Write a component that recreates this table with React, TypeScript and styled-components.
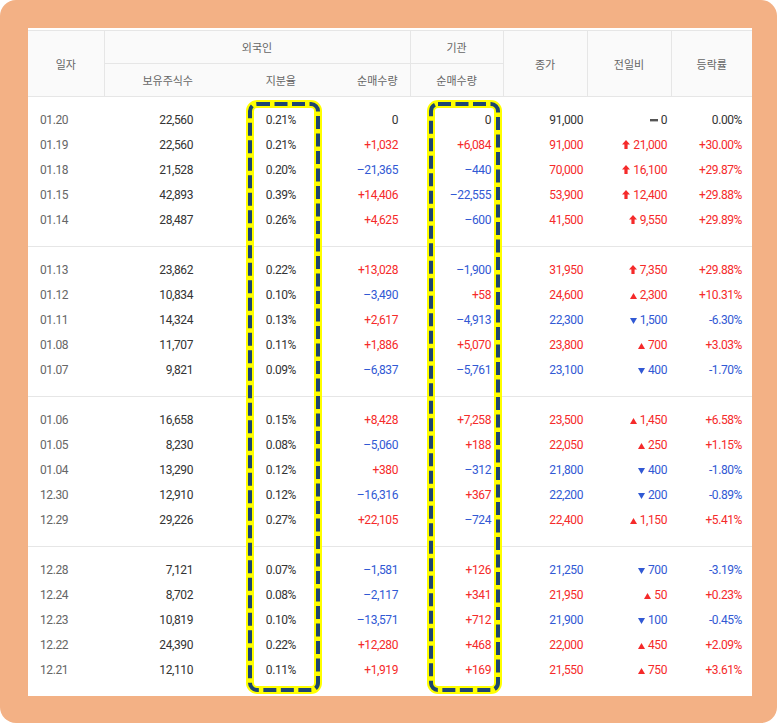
import styled, { createGlobalStyle } from "styled-components";

type Kind = "upper" | "up" | "down" | "flat";
type Row = [string, string, string, string, string, string, Kind, string, string];

const groups: Row[][] = [
  [
    ["01.20", "22,560", "0.21%", "0", "0", "91,000", "flat", "0", "0.00%"],
    ["01.19", "22,560", "0.21%", "+1,032", "+6,084", "91,000", "upper", "21,000", "+30.00%"],
    ["01.18", "21,528", "0.20%", "–21,365", "–440", "70,000", "upper", "16,100", "+29.87%"],
    ["01.15", "42,893", "0.39%", "+14,406", "–22,555", "53,900", "upper", "12,400", "+29.88%"],
    ["01.14", "28,487", "0.26%", "+4,625", "–600", "41,500", "upper", "9,550", "+29.89%"],
  ],
  [
    ["01.13", "23,862", "0.22%", "+13,028", "–1,900", "31,950", "upper", "7,350", "+29.88%"],
    ["01.12", "10,834", "0.10%", "–3,490", "+58", "24,600", "up", "2,300", "+10.31%"],
    ["01.11", "14,324", "0.13%", "+2,617", "–4,913", "22,300", "down", "1,500", "-6.30%"],
    ["01.08", "11,707", "0.11%", "+1,886", "+5,070", "23,800", "up", "700", "+3.03%"],
    ["01.07", "9,821", "0.09%", "–6,837", "–5,761", "23,100", "down", "400", "-1.70%"],
  ],
  [
    ["01.06", "16,658", "0.15%", "+8,428", "+7,258", "23,500", "up", "1,450", "+6.58%"],
    ["01.05", "8,230", "0.08%", "–5,060", "+188", "22,050", "up", "250", "+1.15%"],
    ["01.04", "13,290", "0.12%", "+380", "–312", "21,800", "down", "400", "-1.80%"],
    ["12.30", "12,910", "0.12%", "–16,316", "+367", "22,200", "down", "200", "-0.89%"],
    ["12.29", "29,226", "0.27%", "+22,105", "–724", "22,400", "up", "1,150", "+5.41%"],
  ],
  [
    ["12.28", "7,121", "0.07%", "–1,581", "+126", "21,250", "down", "700", "-3.19%"],
    ["12.24", "8,702", "0.08%", "–2,117", "+341", "21,950", "up", "50", "+0.23%"],
    ["12.23", "10,819", "0.10%", "–13,571", "+712", "21,900", "down", "100", "-0.45%"],
    ["12.22", "24,390", "0.22%", "+12,280", "+468", "22,000", "up", "450", "+2.09%"],
    ["12.21", "12,110", "0.11%", "+1,919", "+169", "21,550", "up", "750", "+3.61%"],
  ],
];

type Tone = "plain" | "rise" | "fall" | "muted";

const toneOf = (v: string): Tone =>
  v.startsWith("+") ? "rise" : v.startsWith("–") || v.startsWith("-") ? "fall" : "plain";

const kindTone = (k: Kind): Tone => (k === "upper" || k === "up" ? "rise" : k === "down" ? "fall" : "plain");

const toneColor = {
  plain: "#333333",
  rise: "#f52a2a",
  fall: "#3159d4",
  muted: "#666666",
};

const widths = [76, 101, 103, 102, 93, 84, 84, 81];

const Global = createGlobalStyle`
  html, body {
    margin: 0;
    background: #ffffff;
  }
  body {
    font-family: Roboto, "Noto Sans CJK KR", sans-serif;
  }
`;

const Frame = styled.div`
  box-sizing: border-box;
  width: 777px;
  height: 723px;
  padding: 28px 25px 27px 28px;
  background: #f3b185;
  border-radius: 16px;
`;

const Panel = styled.div`
  position: relative;
  box-sizing: border-box;
  width: 724px;
  height: 668px;
  padding-top: 2px;
  background: #ffffff;
`;

const Table = styled.table`
  width: 724px;
  border-collapse: collapse;
  table-layout: fixed;
`;

const Col = styled.col<{ $w: number }>`
  width: ${(p) => p.$w}px;
`;

const HeadCell = styled.th<{ $align?: "center" | "right"; $divide?: boolean }>`
  height: 33px;
  padding: 0 ${(p) => (p.$align === "right" ? "12px" : "0")} 0 0;
  box-sizing: border-box;
  background: #fafafa;
  border-top: 1px solid #e6e6e6;
  border-bottom: 1px solid #e6e6e6;
  border-left: ${(p) => (p.$divide ? "1px solid #e6e6e6" : "none")};
  font-family: "Noto Sans CJK KR", sans-serif;
  font-size: 11px;
  font-weight: 400;
  color: #666666;
  text-align: ${(p) => p.$align ?? "center"};
  vertical-align: middle;
`;

const Group = styled.tbody<{ $last?: boolean }>`
  border-bottom: ${(p) => (p.$last ? "none" : "1px solid #e6e6e6")};

  tr:first-child td {
    padding-top: 11px;
  }
  tr:last-child td {
    padding-bottom: 13px;
  }
`;

const Cell = styled.td<{ $tone: Tone; $left?: boolean; $pr?: number }>`
  padding: 0 ${(p) => (p.$left ? 0 : p.$pr ?? 12)}px 0 ${(p) => (p.$left ? 12 : 0)}px;
  line-height: 25px;
  font-size: 12px;
  letter-spacing: -0.4px;
  color: ${(p) => toneColor[p.$tone]};
  text-align: ${(p) => (p.$left ? "left" : "right")};
  white-space: nowrap;
`;

const Mark = styled.svg`
  display: inline-block;
  margin-right: 3px;
  vertical-align: 0px;
`;

const Highlight = styled.svg<{ $left: number; $w: number }>`
  position: absolute;
  top: 72px;
  left: ${(p) => p.$left}px;
  width: ${(p) => p.$w}px;
  height: 594px;
  pointer-events: none;
`;

const DiffIcon = ({ kind }: { kind: Kind }) => {
  if (kind === "upper")
    return (
      <Mark width="8" height="9" viewBox="0 0 8 9">
        <path d="M4 0 L8 4.5 H5.6 V9 H2.4 V4.5 H0 Z" fill="#f52a2a" />
      </Mark>
    );
  if (kind === "up")
    return (
      <Mark width="7" height="6" viewBox="0 0 7 6">
        <path d="M3.5 0 L7 6 H0 Z" fill="#f52a2a" />
      </Mark>
    );
  if (kind === "down")
    return (
      <Mark width="7" height="6" viewBox="0 0 7 6">
        <path d="M0 0 H7 L3.5 6 Z" fill="#3159d4" />
      </Mark>
    );
  return (
    <Mark width="8" height="8" viewBox="0 0 8 8">
      <rect x="0" y="3" width="8" height="2.4" fill="#555555" />
    </Mark>
  );
};

const Box = ({ left, w }: { left: number; w: number }) => (
  <Highlight $left={left} $w={w} viewBox={`0 0 ${w} 594`}>
    <rect x="4" y="4" width={w - 8} height="586" rx="7" fill="none" stroke="#ffff00" strokeWidth="8" />
    <rect
      x="4"
      y="4"
      width={w - 8}
      height="586"
      rx="7"
      fill="none"
      stroke="#1d4670"
      strokeWidth="4"
      strokeDasharray="13 4.5"
    />
  </Highlight>
);

export default function App() {
  return (
    <>
      <Global />
      <Frame>
        <Panel>
          <Table>
            <colgroup>
              {widths.map((w, i) => (
                <Col key={i} $w={w} />
              ))}
            </colgroup>
            <thead>
              <tr>
                <HeadCell rowSpan={2}>일자</HeadCell>
                <HeadCell colSpan={3} $divide>
                  외국인
                </HeadCell>
                <HeadCell $divide>기관</HeadCell>
                <HeadCell rowSpan={2} $divide>
                  종가
                </HeadCell>
                <HeadCell rowSpan={2} $divide>
                  전일비
                </HeadCell>
                <HeadCell rowSpan={2} $divide>
                  등락률
                </HeadCell>
              </tr>
              <tr>
                <HeadCell $align="right" $divide>
                  보유주식수
                </HeadCell>
                <HeadCell $align="right">지분율</HeadCell>
                <HeadCell $align="right">순매수량</HeadCell>
                <HeadCell $divide>순매수량</HeadCell>
              </tr>
            </thead>
            {groups.map((rows, gi) => (
              <Group key={gi} $last={gi === groups.length - 1}>
                {rows.map((r) => (
                  <tr key={r[0]}>
                    <Cell $tone="muted" $left>
                      {r[0]}
                    </Cell>
                    <Cell $tone="plain">{r[1]}</Cell>
                    <Cell $tone="plain">{r[2]}</Cell>
                    <Cell $tone={toneOf(r[3])}>{r[3]}</Cell>
                    <Cell $tone={toneOf(r[4])}>{r[4]}</Cell>
                    <Cell $tone={kindTone(r[6])} $pr={4}>
                      {r[5]}
                    </Cell>
                    <Cell $tone={kindTone(r[6])} $pr={4}>
                      <DiffIcon kind={r[6]} />
                      {r[7]}
                    </Cell>
                    <Cell $tone={toneOf(r[8])} $pr={10}>
                      {r[8]}
                    </Cell>
                  </tr>
                ))}
              </Group>
            ))}
          </Table>
          <Box left={218} w={76} />
          <Box left={399} w={75} />
        </Panel>
      </Frame>
    </>
  );
}
